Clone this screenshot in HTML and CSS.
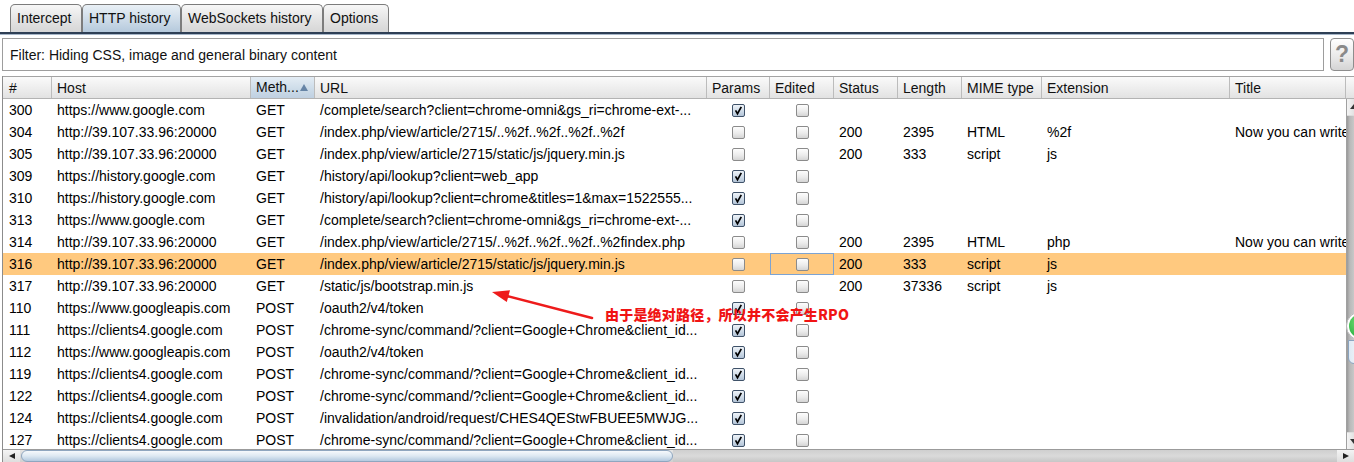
FILE: index.html
```html
<!DOCTYPE html>
<html lang="en">
<head>
<meta charset="utf-8">
<title>Proxy - HTTP history</title>
<link rel="stylesheet" href="styles.css">
</head>
<body>
<div class="app">
  <div class="tabs">
    <div class="tab w-intercept">Intercept</div>
    <div class="tab active w-http">HTTP history</div>
    <div class="tab w-ws">WebSockets history</div>
    <div class="tab w-options">Options</div>
  </div>
  <div class="tabline"></div>

  <div class="filter-row">
    <div class="filter">Filter: Hiding CSS, image and general binary content</div>
    <div class="help">?</div>
  </div>

  <div class="table">
    <div class="thead">
      <div class="th">#</div>
      <div class="th">Host</div>
      <div class="th sorted"><span>Meth...</span><span class="sort-arrow"></span></div>
      <div class="th">URL</div>
      <div class="th">Params</div>
      <div class="th">Edited</div>
      <div class="th">Status</div>
      <div class="th">Length</div>
      <div class="th">MIME type</div>
      <div class="th">Extension</div>
      <div class="th">Title</div>
      <div class="th corner"></div>
    </div>

    <div class="tbody-wrap">
      <div class="tbody">
        <div class="row"><div class="td">300</div><div class="td">https://www.google.com</div><div class="td">GET</div><div class="td">/complete/search?client=chrome-omni&amp;gs_ri=chrome-ext-...</div><div class="td c"><span class="cb on"><svg viewBox="0 0 13 13"><path d="M3 6.4 L5.3 10.3 L9.8 2.2"/></svg></span></div><div class="td c"><span class="cb"></span></div><div class="td"></div><div class="td"></div><div class="td"></div><div class="td"></div><div class="td"></div></div>
        <div class="row"><div class="td">304</div><div class="td">http://39.107.33.96:20000</div><div class="td">GET</div><div class="td">/index.php/view/article/2715/..%2f..%2f..%2f..%2f</div><div class="td c"><span class="cb"></span></div><div class="td c"><span class="cb"></span></div><div class="td">200</div><div class="td">2395</div><div class="td">HTML</div><div class="td">%2f</div><div class="td clip">Now you can write</div></div>
        <div class="row"><div class="td">305</div><div class="td">http://39.107.33.96:20000</div><div class="td">GET</div><div class="td">/index.php/view/article/2715/static/js/jquery.min.js</div><div class="td c"><span class="cb"></span></div><div class="td c"><span class="cb"></span></div><div class="td">200</div><div class="td">333</div><div class="td">script</div><div class="td">js</div><div class="td"></div></div>
        <div class="row"><div class="td">309</div><div class="td">https://history.google.com</div><div class="td">GET</div><div class="td">/history/api/lookup?client=web_app</div><div class="td c"><span class="cb on"><svg viewBox="0 0 13 13"><path d="M3 6.4 L5.3 10.3 L9.8 2.2"/></svg></span></div><div class="td c"><span class="cb"></span></div><div class="td"></div><div class="td"></div><div class="td"></div><div class="td"></div><div class="td"></div></div>
        <div class="row"><div class="td">310</div><div class="td">https://history.google.com</div><div class="td">GET</div><div class="td">/history/api/lookup?client=chrome&amp;titles=1&amp;max=1522555...</div><div class="td c"><span class="cb on"><svg viewBox="0 0 13 13"><path d="M3 6.4 L5.3 10.3 L9.8 2.2"/></svg></span></div><div class="td c"><span class="cb"></span></div><div class="td"></div><div class="td"></div><div class="td"></div><div class="td"></div><div class="td"></div></div>
        <div class="row"><div class="td">313</div><div class="td">https://www.google.com</div><div class="td">GET</div><div class="td">/complete/search?client=chrome-omni&amp;gs_ri=chrome-ext-...</div><div class="td c"><span class="cb on"><svg viewBox="0 0 13 13"><path d="M3 6.4 L5.3 10.3 L9.8 2.2"/></svg></span></div><div class="td c"><span class="cb"></span></div><div class="td"></div><div class="td"></div><div class="td"></div><div class="td"></div><div class="td"></div></div>
        <div class="row"><div class="td">314</div><div class="td">http://39.107.33.96:20000</div><div class="td">GET</div><div class="td">/index.php/view/article/2715/..%2f..%2f..%2f..%2findex.php</div><div class="td c"><span class="cb"></span></div><div class="td c"><span class="cb"></span></div><div class="td">200</div><div class="td">2395</div><div class="td">HTML</div><div class="td">php</div><div class="td clip">Now you can write</div></div>
        <div class="row selected"><div class="td">316</div><div class="td">http://39.107.33.96:20000</div><div class="td">GET</div><div class="td">/index.php/view/article/2715/static/js/jquery.min.js</div><div class="td c"><span class="cb"></span></div><div class="td c focus"><span class="cb"></span></div><div class="td">200</div><div class="td">333</div><div class="td">script</div><div class="td">js</div><div class="td"></div></div>
        <div class="row"><div class="td">317</div><div class="td">http://39.107.33.96:20000</div><div class="td">GET</div><div class="td">/static/js/bootstrap.min.js</div><div class="td c"><span class="cb"></span></div><div class="td c"><span class="cb"></span></div><div class="td">200</div><div class="td">37336</div><div class="td">script</div><div class="td">js</div><div class="td"></div></div>
        <div class="row"><div class="td">110</div><div class="td">https://www.googleapis.com</div><div class="td">POST</div><div class="td">/oauth2/v4/token</div><div class="td c"><span class="cb on"><svg viewBox="0 0 13 13"><path d="M3 6.4 L5.3 10.3 L9.8 2.2"/></svg></span></div><div class="td c"><span class="cb"></span></div><div class="td"></div><div class="td"></div><div class="td"></div><div class="td"></div><div class="td"></div></div>
        <div class="row"><div class="td">111</div><div class="td">https://clients4.google.com</div><div class="td">POST</div><div class="td">/chrome-sync/command/?client=Google+Chrome&amp;client_id...</div><div class="td c"><span class="cb on"><svg viewBox="0 0 13 13"><path d="M3 6.4 L5.3 10.3 L9.8 2.2"/></svg></span></div><div class="td c"><span class="cb"></span></div><div class="td"></div><div class="td"></div><div class="td"></div><div class="td"></div><div class="td"></div></div>
        <div class="row"><div class="td">112</div><div class="td">https://www.googleapis.com</div><div class="td">POST</div><div class="td">/oauth2/v4/token</div><div class="td c"><span class="cb on"><svg viewBox="0 0 13 13"><path d="M3 6.4 L5.3 10.3 L9.8 2.2"/></svg></span></div><div class="td c"><span class="cb"></span></div><div class="td"></div><div class="td"></div><div class="td"></div><div class="td"></div><div class="td"></div></div>
        <div class="row"><div class="td">119</div><div class="td">https://clients4.google.com</div><div class="td">POST</div><div class="td">/chrome-sync/command/?client=Google+Chrome&amp;client_id...</div><div class="td c"><span class="cb on"><svg viewBox="0 0 13 13"><path d="M3 6.4 L5.3 10.3 L9.8 2.2"/></svg></span></div><div class="td c"><span class="cb"></span></div><div class="td"></div><div class="td"></div><div class="td"></div><div class="td"></div><div class="td"></div></div>
        <div class="row"><div class="td">122</div><div class="td">https://clients4.google.com</div><div class="td">POST</div><div class="td">/chrome-sync/command/?client=Google+Chrome&amp;client_id...</div><div class="td c"><span class="cb on"><svg viewBox="0 0 13 13"><path d="M3 6.4 L5.3 10.3 L9.8 2.2"/></svg></span></div><div class="td c"><span class="cb"></span></div><div class="td"></div><div class="td"></div><div class="td"></div><div class="td"></div><div class="td"></div></div>
        <div class="row"><div class="td">124</div><div class="td">https://clients4.google.com</div><div class="td">POST</div><div class="td">/invalidation/android/request/CHES4QEStwFBUEE5MWJG...</div><div class="td c"><span class="cb on"><svg viewBox="0 0 13 13"><path d="M3 6.4 L5.3 10.3 L9.8 2.2"/></svg></span></div><div class="td c"><span class="cb"></span></div><div class="td"></div><div class="td"></div><div class="td"></div><div class="td"></div><div class="td"></div></div>
        <div class="row"><div class="td">127</div><div class="td">https://clients4.google.com</div><div class="td">POST</div><div class="td">/chrome-sync/command/?client=Google+Chrome&amp;client_id...</div><div class="td c"><span class="cb on"><svg viewBox="0 0 13 13"><path d="M3 6.4 L5.3 10.3 L9.8 2.2"/></svg></span></div><div class="td c"><span class="cb"></span></div><div class="td"></div><div class="td"></div><div class="td"></div><div class="td"></div><div class="td"></div></div>
      </div>
      <div class="vscroll">
        <div class="vbtn up"><span class="tri-up"></span></div>
        <div class="vthumb"></div>
        <div class="vbtn down"><span class="tri-down"></span></div>
      </div>
    </div>

    <div class="hscroll">
      <div class="hbtn"><span class="tri-left"></span></div>
      <div class="hthumb"></div>
      <div class="htrack"></div>
      <div class="hbtn"><span class="tri-right"></span></div>
    </div>
  </div>

  <svg class="arrow" width="130" height="50" viewBox="480 280 130 50">
    <line x1="592" y1="318" x2="505" y2="295.5" stroke="#ee1b1b" stroke-width="2.6" stroke-linecap="round"/>
    <polygon points="492,292 510,290.2 506.8,302" fill="#ee1b1b"/>
  </svg>
  <div class="note">由于是绝对路径，所以并不会产生RPO</div>

  <div class="ball"><div class="ball-core"></div></div>
  <div class="ball-tail"></div>
</div>
</body>
</html>
```

FILE: styles.css
```css
html, body {
  margin: 0;
  padding: 0;
  background: #ffffff;
  overflow: hidden;
}

body {
  width: 1354px;
  height: 462px;
  font-family: "Liberation Sans", Arial, sans-serif;
  font-size: 14px;
  color: #000;
}

.app {
  position: relative;
  width: 1354px;
  height: 462px;
  overflow: hidden;
}

/* ---------- tabs ---------- */
.tabs {
  display: flex;
  padding: 4px 0 0 10px;
  height: 28px;
}

.tab {
  box-sizing: border-box;
  height: 28px;
  border: 1px solid #7c7c7c;
  border-bottom: none;
  border-radius: 5px 5px 0 0;
  padding: 0 6px;
  line-height: 27px;
  background: linear-gradient(#f7f7f7, #e2e2e2 60%, #d6d6d6);
  color: #111;
  white-space: nowrap;
}

.tab.active {
  background: linear-gradient(#e9f0f6, #cddbe8 55%, #b5c9dc);
}

.w-intercept { width: 72px; }
.w-http { width: 99px; }
.w-ws { width: 142px; }
.w-options { width: 66px; }

.tabline {
  height: 2px;
  background: #2e3f55;
  border-bottom: 1px solid #a6b6c8;
}

/* ---------- filter ---------- */
.filter-row {
  display: flex;
  margin-top: 3px;
  height: 33px;
}

.filter {
  box-sizing: border-box;
  width: 1326px;
  margin-left: 2px;
  height: 33px;
  border: 1px solid #9d9d9d;
  padding-left: 7px;
  line-height: 33px;
  background: #fff;
  color: #111;
}

.help {
  box-sizing: border-box;
  flex: none;
  width: 24px;
  height: 33px;
  margin-left: 6px;
  border: 1px solid #8d8d8d;
  border-radius: 4px;
  background: linear-gradient(#ffffff, #e8e8e8 60%, #d4d4d4);
  color: #8a8a8a;
  font-weight: bold;
  font-size: 23px;
  line-height: 30px;
  padding-left: 4px;
}

/* ---------- table ---------- */
.table {
  margin-top: 5px;
  margin-left: 2px;
  border-left: 1px solid #8c8c8c;
}

.thead {
  box-sizing: border-box;
  display: grid;
  grid-template-columns: 49px 199px 64px 392px 63px 64px 64px 64px 80px 188px 116px 1fr;
  height: 23px;
  border-top: 1px solid #a3a3a3;
  border-bottom: 1px solid #b3b3b3;
  background: linear-gradient(#fafafa, #ececec 60%, #e2e2e2);
}

.th {
  box-sizing: border-box;
  padding: 0 5px;
  line-height: 23px;
  border-right: 1px solid #bcbcbc;
  color: #111;
  white-space: nowrap;
  overflow: hidden;
}

.th:first-child { padding-left: 6px; }

.th.sorted {
  display: flex;
  align-items: center;
  justify-content: space-between;
  background: linear-gradient(#e3ecf4, #ccdbe8 60%, #bfd0e1);
}

.sort-arrow {
  width: 0;
  height: 0;
  border-left: 4px solid transparent;
  border-right: 4px solid transparent;
  border-bottom: 7px solid #6684a6;
  margin-right: 1px;
}

.th.corner { border-right: none; }

.tbody-wrap {
  display: flex;
  height: 350px;
}

.tbody {
  width: 1343px;
  flex: none;
  overflow: hidden;
  background: #fff;
}

.row {
  display: grid;
  grid-template-columns: 49px 199px 64px 392px 63px 64px 64px 64px 80px 188px 116px;
  height: 22px;
}

.row.selected { background: #ffc97f; }

.td {
  box-sizing: border-box;
  padding: 0 5px;
  line-height: 22px;
  white-space: nowrap;
  overflow: hidden;
}

.td:first-child { padding-left: 6px; }

.td.c {
  display: flex;
  align-items: center;
  justify-content: center;
  padding: 0;
}

.td.focus { box-shadow: inset 0 0 0 1px #7ca3d2; }

.td.clip { text-overflow: clip; }

/* checkboxes */
.cb {
  box-sizing: border-box;
  display: block;
  width: 13px;
  height: 13px;
  border: 1px solid #8b8b8b;
  border-radius: 2px;
  background: linear-gradient(#fdfdfd, #ececec 55%, #d5d5d5);
}

.cb.on {
  border-color: #3f5269;
  background: linear-gradient(#eef3f8, #cfdbe8 55%, #b3c4d7);
}

.cb svg {
  display: block;
  width: 11px;
  height: 11px;
}

.cb svg path {
  fill: none;
  stroke: #000;
  stroke-width: 2;
  stroke-linejoin: miter;
}

/* vertical scrollbar (cut at the right edge) */
.vscroll {
  flex: none;
  width: 8px;
  display: flex;
  flex-direction: column;
  border-left: 1px solid #a0a0a0;
  box-sizing: border-box;
  background: #dcdcdc;
}

.vbtn {
  height: 16px;
  background: linear-gradient(90deg, #f4f4f4, #e2e2e2);
  position: relative;
  flex: none;
}

.vthumb {
  flex: 1;
  margin: 1px 0;
  background: linear-gradient(90deg, #9a9a9a, #b9b9b9 40%, #c8c8c8);
}

.tri-up, .tri-down {
  position: absolute;
  left: 3px;
  width: 0;
  height: 0;
  border-left: 4px solid transparent;
  border-right: 4px solid transparent;
}

.tri-up { top: 5px; border-bottom: 5px solid #333; }
.tri-down { top: 6px; border-top: 5px solid #333; }

/* horizontal scrollbar */
.hscroll {
  display: flex;
  height: 13px;
  border-top: 1px solid #9b9b9b;
  box-sizing: border-box;
  background: linear-gradient(#e4e4e4, #d0d0d0);
}

.hbtn {
  flex: none;
  width: 17px;
  display: flex;
  align-items: center;
  justify-content: center;
  background: linear-gradient(#f4f4f4, #dedede);
}

.tri-left, .tri-right {
  width: 0;
  height: 0;
  border-top: 3px solid transparent;
  border-bottom: 3px solid transparent;
}

.tri-left { border-right: 6px solid #222; }
.tri-right { border-left: 6px solid #222; }

.hthumb {
  flex: none;
  width: 652px;
  margin-left: 1px;
  border: 1px solid #8fa6bf;
  border-radius: 7px;
  box-sizing: border-box;
  background: linear-gradient(#f6f9fc, #dde8f2 50%, #b3c9df);
}

.htrack {
  flex: 1;
  background: linear-gradient(#cfcfcf, #dadada 50%, #c6c6c6);
}

/* ---------- annotation ---------- */
.arrow {
  position: absolute;
  left: 480px;
  top: 280px;
}

.note {
  position: absolute;
  left: 605px;
  top: 305px;
  font-family: "Noto Sans CJK SC", "Liberation Sans", sans-serif;
  font-weight: 900;
  font-size: 14px;
  line-height: 18px;
  letter-spacing: 0.2px;
  color: #f01414;
  white-space: nowrap;
}

/* floating widget cut at the right edge */
.ball {
  position: absolute;
  left: 1346px;
  top: 311px;
  width: 30px;
  height: 30px;
  box-sizing: border-box;
  border-radius: 50%;
  background: #ffffff;
  border: 1px solid #b8b8b8;
  display: flex;
  align-items: center;
  justify-content: center;
}

.ball-core {
  width: 24px;
  height: 24px;
  border-radius: 50%;
  background: radial-gradient(circle at 40% 35%, #6fdc74, #2fb444 70%, #23993a);
}

.ball-tail {
  position: absolute;
  left: 1348px;
  top: 340px;
  width: 14px;
  height: 24px;
  box-sizing: border-box;
  border: 1px solid #8aa4c0;
  border-radius: 0 0 0 6px;
  background: linear-gradient(90deg, #dfe9f3, #f6f9fc);
}
```
